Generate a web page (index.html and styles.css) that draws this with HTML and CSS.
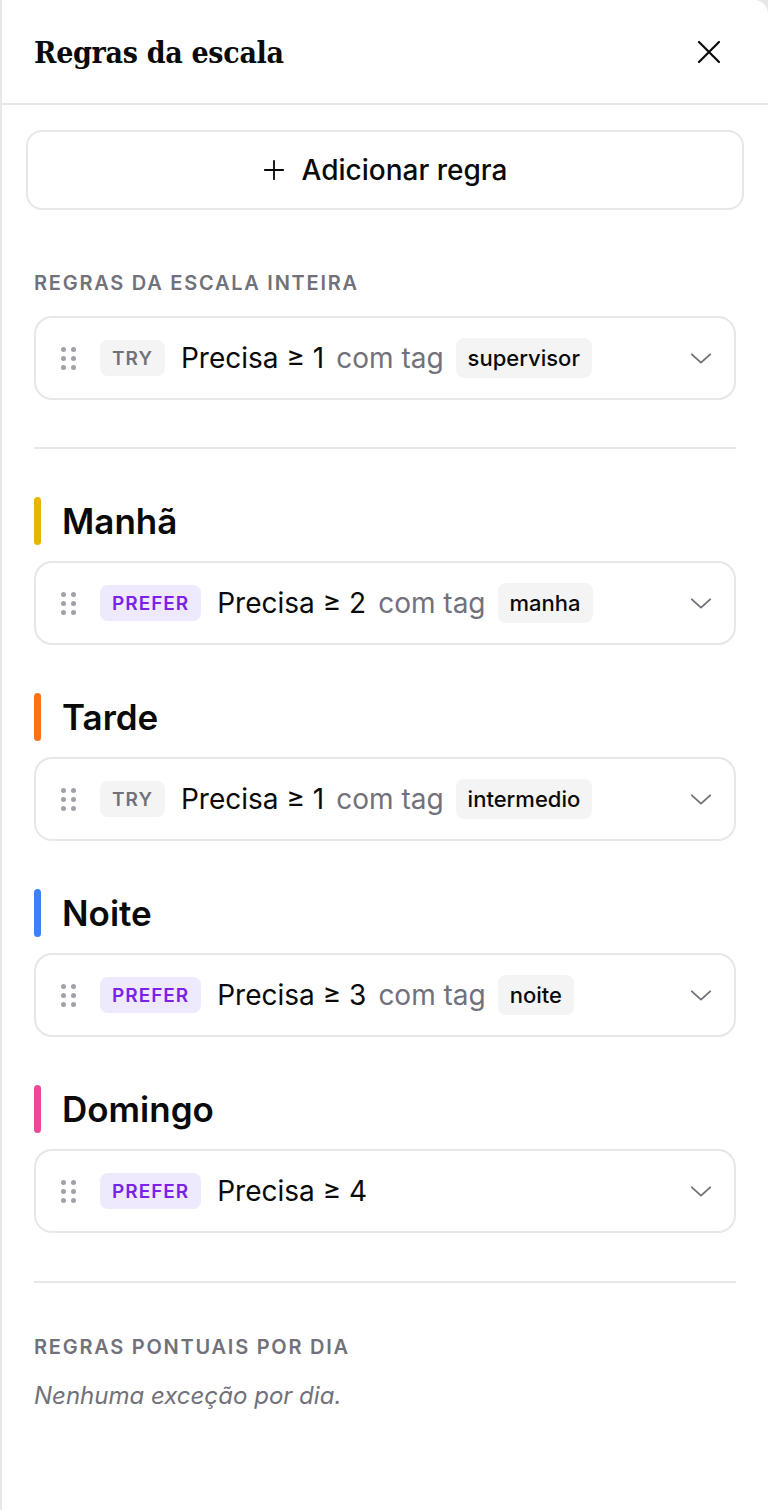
FILE: index.html
```html
<!DOCTYPE html>
<html lang="pt-BR">

<head>
    <meta charset="UTF-8">
    <title>Regras da escala</title>
    <link rel="stylesheet" href="styles.css">
</head>

<body>

    <aside class="panel">
        <header class="panel-header">
            <h2 class="panel-title">Regras da escala</h2>
            <button class="close-btn" aria-label="Fechar">
                <svg width="24" height="24" viewBox="0 0 24 24" fill="none" stroke="currentColor" stroke-width="2.2" stroke-linecap="round">
                    <path d="M2 2l20 20M22 2L2 22" />
                </svg>
            </button>
        </header>

        <div class="panel-body">
            <button class="add-btn">
                <svg width="22" height="22" viewBox="0 0 24 24" fill="none" stroke="currentColor" stroke-width="2" stroke-linecap="round">
                    <path d="M12 2v20M2 12h20" />
                </svg>
                Adicionar regra
            </button>

            <div class="section">
                <h4 class="section-label">Regras da escala inteira</h4>

                <div class="rule">
                    <span class="handle"><i></i><i></i><i></i><i></i><i></i><i></i></span>
                    <span class="badge badge-try">TRY</span>
                    <span class="rule-text">Precisa ≥ 1</span>
                    <span class="muted">com tag</span>
                    <span class="tag">supervisor</span>
                    <svg class="chevron" width="22" height="22" viewBox="0 0 24 24" fill="none" stroke="currentColor" stroke-width="2" stroke-linecap="round" stroke-linejoin="round">
                        <path d="M2 8l10 9 10-9" />
                    </svg>
                </div>

                <hr class="divider">

                <div class="shift">
                    <h3 class="shift-title"><span class="bar bar-manha"></span>Manhã</h3>
                    <div class="rule">
                        <span class="handle"><i></i><i></i><i></i><i></i><i></i><i></i></span>
                        <span class="badge badge-prefer">PREFER</span>
                        <span class="rule-text">Precisa ≥ 2</span>
                        <span class="muted">com tag</span>
                        <span class="tag">manha</span>
                        <svg class="chevron" width="22" height="22" viewBox="0 0 24 24" fill="none" stroke="currentColor" stroke-width="2" stroke-linecap="round" stroke-linejoin="round">
                            <path d="M2 8l10 9 10-9" />
                        </svg>
                    </div>
                </div>

                <div class="shift">
                    <h3 class="shift-title"><span class="bar bar-tarde"></span>Tarde</h3>
                    <div class="rule">
                        <span class="handle"><i></i><i></i><i></i><i></i><i></i><i></i></span>
                        <span class="badge badge-try">TRY</span>
                        <span class="rule-text">Precisa ≥ 1</span>
                        <span class="muted">com tag</span>
                        <span class="tag">intermedio</span>
                        <svg class="chevron" width="22" height="22" viewBox="0 0 24 24" fill="none" stroke="currentColor" stroke-width="2" stroke-linecap="round" stroke-linejoin="round">
                            <path d="M2 8l10 9 10-9" />
                        </svg>
                    </div>
                </div>

                <div class="shift">
                    <h3 class="shift-title"><span class="bar bar-noite"></span>Noite</h3>
                    <div class="rule">
                        <span class="handle"><i></i><i></i><i></i><i></i><i></i><i></i></span>
                        <span class="badge badge-prefer">PREFER</span>
                        <span class="rule-text">Precisa ≥ 3</span>
                        <span class="muted">com tag</span>
                        <span class="tag">noite</span>
                        <svg class="chevron" width="22" height="22" viewBox="0 0 24 24" fill="none" stroke="currentColor" stroke-width="2" stroke-linecap="round" stroke-linejoin="round">
                            <path d="M2 8l10 9 10-9" />
                        </svg>
                    </div>
                </div>

                <div class="shift">
                    <h3 class="shift-title"><span class="bar bar-domingo"></span>Domingo</h3>
                    <div class="rule">
                        <span class="handle"><i></i><i></i><i></i><i></i><i></i><i></i></span>
                        <span class="badge badge-prefer">PREFER</span>
                        <span class="rule-text">Precisa ≥ 4</span>
                        <svg class="chevron" width="22" height="22" viewBox="0 0 24 24" fill="none" stroke="currentColor" stroke-width="2" stroke-linecap="round" stroke-linejoin="round">
                            <path d="M2 8l10 9 10-9" />
                        </svg>
                    </div>
                </div>

                <hr class="divider divider-bottom">

                <h4 class="section-label section-label-day">Regras pontuais por dia</h4>
                <p class="empty">Nenhuma exceção por dia.</p>
            </div>
        </div>
    </aside>

</body>

</html>
```

FILE: styles.css
```css
html,
body {
    margin: 0;
    height: 100%;
}

body {
    font-family: Inter, "Noto Sans", sans-serif;
    background-color: #e7e7e9;
    color: #0a0a0a;
}

.panel {
    margin-left: 2px;
    min-height: 100%;
    background-color: #fff;
    border-top-right-radius: 14px;
}

.panel-header {
    display: flex;
    align-items: center;
    justify-content: space-between;
    height: 103px;
    padding: 0 47px 0 32px;
    border-bottom: 2px solid #e7e7e9;
}

.panel-title {
    margin: 2px 0 0;
    font-family: "DejaVu Serif", serif;
    font-stretch: condensed;
    font-size: 30px;
    font-weight: bold;
    letter-spacing: -0.3px;
}

.close-btn {
    border: none;
    background: none;
    padding: 0;
    color: #0a0a0a;
    display: flex;
    cursor: pointer;
}

.panel-body {
    padding: 25px 24px 40px;
}

.add-btn {
    width: 100%;
    height: 80px;
    display: flex;
    align-items: center;
    justify-content: center;
    gap: 17px;
    border: 2px solid #e7e7e9;
    border-radius: 16px;
    background-color: #fff;
    font-family: Inter, sans-serif;
    font-size: 28px;
    font-weight: 500;
    color: #0a0a0a;
    cursor: pointer;
}

.section {
    padding: 0 8px;
}

.section-label {
    margin: 61px 0 21px;
    font-size: 20px;
    line-height: 24px;
    font-weight: 600;
    letter-spacing: 1.75px;
    text-transform: uppercase;
    color: #71717a;
}

.rule {
    display: flex;
    align-items: center;
    gap: 12px;
    height: 80px;
    padding: 0 22px 0 25px;
    border: 2px solid #e7e7e9;
    border-radius: 18px;
}

.handle {
    display: grid;
    grid-template-columns: 5px 5px;
    gap: 4px 5px;
    margin-right: 12px;
}

.handle i {
    width: 5px;
    height: 5px;
    border-radius: 50%;
    background-color: #a1a1aa;
}

.badge {
    height: 36px;
    padding: 0 12px;
    display: flex;
    align-items: center;
    border-radius: 8px;
    font-size: 19px;
    font-weight: 600;
    letter-spacing: 1px;
    margin-right: 4px;
}

.badge-try {
    background-color: #f4f4f5;
    color: #71717a;
}

.badge-prefer {
    background-color: #efe9fe;
    color: #7c22e6;
}

.rule-text {
    font-size: 28px;
}

.muted {
    font-size: 28px;
    color: #71717a;
}

.tag {
    height: 40px;
    padding: 0 12px;
    display: flex;
    align-items: center;
    border-radius: 8px;
    background-color: #f4f4f5;
    font-size: 22px;
    font-weight: 500;
}

.chevron {
    margin-left: auto;
    color: #71717a;
}

.divider {
    margin: 47px 0 0;
    border: none;
    border-top: 2px solid #e7e7e9;
}

.shift {
    margin-top: 48px;
}

.shift-title {
    display: flex;
    align-items: center;
    gap: 21px;
    height: 48px;
    margin: 0 0 16px;
    font-size: 35px;
    font-weight: 600;
}

.bar {
    width: 7px;
    height: 48px;
    border-radius: 4px;
}

.bar-manha {
    background-color: #eab308;
}

.bar-tarde {
    background-color: #f97316;
}

.bar-noite {
    background-color: #3b82f6;
}

.bar-domingo {
    background-color: #ec4899;
}

.divider-bottom {
    margin-top: 48px;
}

.section-label-day {
    margin: 52px 0 22px;
}

.empty {
    margin: 0;
    font-size: 24px;
    line-height: 29px;
    font-style: italic;
    color: #71717a;
}
```
